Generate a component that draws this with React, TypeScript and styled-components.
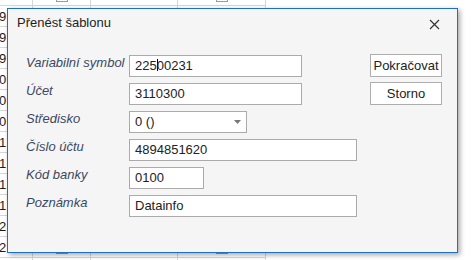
import React from "react";
import styled, { createGlobalStyle } from "styled-components";

const GlobalStyle = createGlobalStyle`
  html, body {
    margin: 0;
    padding: 0;
    background: #fff;
  }
  body {
    font-family: "Liberation Sans", Arial, sans-serif;
    overflow: hidden;
  }
  #root {
    position: relative;
    width: 473px;
    height: 260px;
    overflow: hidden;
  }
`;

// spreadsheet behind the dialog
const Sheet = styled.div`
  margin-top: -15px;
  width: 266px;
`;

const SheetRow = styled.div`
  display: flex;
  height: 21px;
  border-bottom: 1px solid #d6d6d6;
  box-sizing: border-box;
`;

const SheetCell = styled.div<{ $w: number }>`
  width: ${(p) => p.$w}px;
  border-right: 1px solid #d6d6d6;
  box-sizing: border-box;
  display: flex;
  align-items: center;
  justify-content: center;
  font-size: 13px;
  color: #1a1a1a;
`;

const NumberCell = styled(SheetCell)`
  justify-content: flex-start;
  text-indent: -1px;
`;

const CheckBox = styled.span`
  width: 12px;
  height: 12px;
  margin-top: 2px;
  border: 1px solid #9a9a9a;
  background: #fff;
  box-sizing: border-box;
`;

// dialog
const Dialog = styled.div`
  position: absolute;
  left: 7px;
  top: 8px;
  width: 451px;
  height: 245px;
  box-sizing: border-box;
  background: #f5f5f5;
  border: 1px solid #1d6fc6;
  box-shadow: 2px 2px 5px rgba(0, 0, 0, 0.35);
`;

const Header = styled.div`
  display: flex;
  justify-content: space-between;
  align-items: flex-start;
  height: 46px;
  padding: 6px 17px 0 9px;
  box-sizing: border-box;
`;

const Title = styled.div`
  font-size: 13px;
  line-height: 16px;
  color: #1e1e1e;
`;

const CloseButton = styled.button`
  margin-top: 4px;
  padding: 0;
  border: 0;
  background: none;
  width: 11px;
  height: 11px;
  display: flex;
  cursor: pointer;
`;

const Body = styled.div`
  display: flex;
  align-items: flex-start;
  padding-left: 18px;
`;

const Form = styled.div`
  display: grid;
  grid-template-columns: 103px 228px;
  grid-auto-rows: 22px;
  row-gap: 6px;
`;

const Label = styled.div`
  align-self: start;
  font-size: 13px;
  line-height: 15px;
  font-style: italic;
  color: #3c4862;
  white-space: nowrap;
`;

const Field = styled.div<{ $w: number }>`
  width: ${(p) => p.$w}px;
  height: 22px;
  box-sizing: border-box;
  border: 1px solid #ababab;
  background: #fff;
  padding: 0 5px;
  font-size: 13px;
  line-height: 20px;
  color: #222;
  white-space: nowrap;
`;

const SelectField = styled(Field)`
  display: flex;
  justify-content: space-between;
  align-items: center;
  padding-right: 5px;
`;

const Caret = styled.span`
  display: inline-block;
  width: 1px;
  height: 12px;
  margin-right: -1px;
  background: #000;
  vertical-align: -1px;
`;

const Actions = styled.div`
  display: flex;
  flex-direction: column;
  gap: 5px;
  margin-left: 13px;
  margin-top: -1px;
`;

const Button = styled.button`
  width: 72px;
  height: 23px;
  padding: 0;
  box-sizing: border-box;
  border: 1px solid #adadad;
  background: #fff;
  font-family: "Liberation Sans", Arial, sans-serif;
  font-size: 13px;
  color: #222;
  cursor: pointer;
`;

// first and last rows are only partly visible, so they carry no number
const rowDigits = ["", "9", "9", "9", "0", "0", "0", "1", "1", "1", "1", "2", "2", ""];

const App: React.FC = () => {
  return (
    <>
      <GlobalStyle />
      <Sheet>
        {rowDigits.map((d, i) => (
          <SheetRow key={i}>
            <NumberCell $w={33}>{d}</NumberCell>
            <SheetCell $w={58}>
              <CheckBox />
            </SheetCell>
            <SheetCell $w={87} />
            <SheetCell $w={88}>
              <CheckBox />
            </SheetCell>
          </SheetRow>
        ))}
      </Sheet>

      <Dialog>
        <Header>
          <Title>Přenést šablonu</Title>
          <CloseButton aria-label="Zavřít">
            <svg width="11" height="11" viewBox="0 0 11 11">
              <path d="M1 1 L10 10 M10 1 L1 10" stroke="#333" strokeWidth="1.2" />
            </svg>
          </CloseButton>
        </Header>
        <Body>
          <Form>
            <Label>Variabilní symbol</Label>
            <Field $w={173}>
              225
              <Caret />
              00231
            </Field>
            <Label>Účet</Label>
            <Field $w={173}>3110300</Field>
            <Label>Středisko</Label>
            <SelectField $w={118}>
              <span>0 ()</span>
              <svg width="7" height="4" viewBox="0 0 7 4">
                <path d="M0 0 H7 L3.5 4 Z" fill="#777" />
              </svg>
            </SelectField>
            <Label>Číslo účtu</Label>
            <Field $w={228}>4894851620</Field>
            <Label>Kód banky</Label>
            <Field $w={75}>0100</Field>
            <Label>Poznámka</Label>
            <Field $w={228}>Datainfo</Field>
          </Form>
          <Actions>
            <Button>Pokračovat</Button>
            <Button>Storno</Button>
          </Actions>
        </Body>
      </Dialog>
    </>
  );
};

export default App;
